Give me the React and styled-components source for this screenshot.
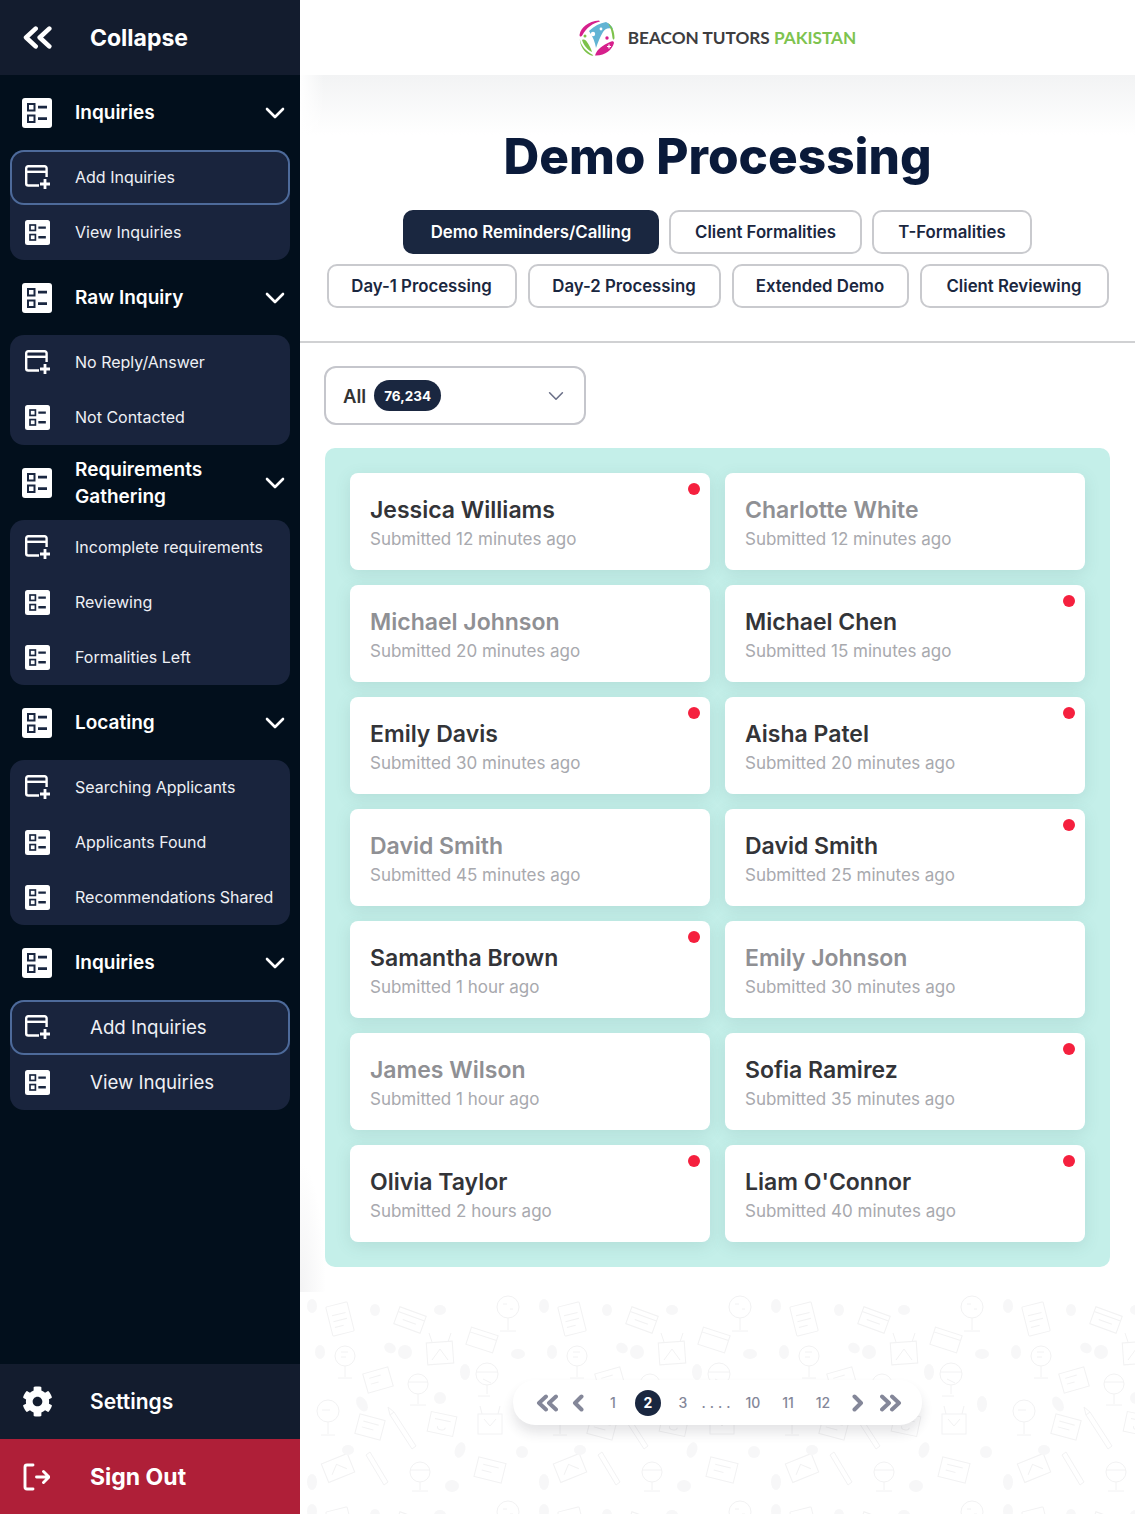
import React from 'react'
import styled, { createGlobalStyle } from 'styled-components'
import { FaCog } from 'react-icons/fa'

const font = 'Inter, "Open Sans", sans-serif'

const nav = [
  { title: 'Inquiries', items: [{ label: 'Add Inquiries', plus: true, active: true }, { label: 'View Inquiries' }] },
  { title: 'Raw Inquiry', items: [{ label: 'No Reply/Answer', plus: true }, { label: 'Not Contacted' }] },
  { title: 'Requirements Gathering', items: [{ label: 'Incomplete requirements', plus: true }, { label: 'Reviewing' }, { label: 'Formalities Left' }] },
  { title: 'Locating', items: [{ label: 'Searching Applicants', plus: true }, { label: 'Applicants Found' }, { label: 'Recommendations Shared' }] },
  { title: 'Inquiries', large: true, items: [{ label: 'Add Inquiries', plus: true, active: true }, { label: 'View Inquiries' }] },
]

const tabRows = [
  { gap: 10, tabs: [['Demo Reminders/Calling', 256, true], ['Client Formalities', 193], ['T-Formalities', 160]] },
  { gap: 11, tabs: [['Day-1 Processing', 190], ['Day-2 Processing', 193], ['Extended Demo', 177], ['Client Reviewing', 189]] },
]

const cards = [
  ['Jessica Williams', 'Submitted 12 minutes ago', true],
  ['Charlotte White', 'Submitted 12 minutes ago', false],
  ['Michael Johnson', 'Submitted 20 minutes ago', false],
  ['Michael Chen', 'Submitted 15 minutes ago', true],
  ['Emily Davis', 'Submitted 30 minutes ago', true],
  ['Aisha Patel', 'Submitted 20 minutes ago', true],
  ['David Smith', 'Submitted 45 minutes ago', false],
  ['David Smith', 'Submitted 25 minutes ago', true],
  ['Samantha Brown', 'Submitted 1 hour ago', true],
  ['Emily Johnson', 'Submitted 30 minutes ago', false],
  ['James Wilson', 'Submitted 1 hour ago', false],
  ['Sofia Ramirez', 'Submitted 35 minutes ago', true],
  ['Olivia Taylor', 'Submitted 2 hours ago', true],
  ["Liam O'Connor", 'Submitted 40 minutes ago', true],
]

const ListIcon = ({ size = 30 }) => (
  <svg width={size} height={size} viewBox="0 0 30 30">
    <rect width="30" height="30" rx="3" fill="#fff" />
    <rect x="6" y="6" width="6.500" height="6.500" fill="none" stroke="#1a2740" strokeWidth="2" />
    <rect x="6" y="17.500" width="6.500" height="6.500" fill="none" stroke="#1a2740" strokeWidth="2" />
    <path d="M16 9.200h9M16 20.700h9" stroke="#1a2740" strokeWidth="2.800" />
  </svg>
)

const CardPlusIcon = () => (
  <svg width="26" height="26" viewBox="0 0 26 26" fill="none" stroke="#fff">
    <path d="M21.600 12V3.200a2 2 0 0 0-2-2H3.200a2 2 0 0 0-2 2v15.300a2 2 0 0 0 2 2H14" strokeWidth="2.400" />
    <path d="M1.200 6.800h20.400" strokeWidth="2.400" />
    <path d="M20 14v10M15 19h10" strokeWidth="2.800" />
  </svg>
)

const Chevron = ({ color = '#fff', size = 20, width = 2.6 }) => (
  <svg width={size} height={size} viewBox="0 0 20 20" fill="none" stroke={color} strokeWidth={width} strokeLinecap="round" strokeLinejoin="round">
    <path d="M2 6l8 8 8-8" />
  </svg>
)

const Arrow = ({ double, flip, color = '#848799', width = 22, height = 18, stroke = 4 }) => (
  <svg width={width} height={height} viewBox={double ? '0 0 22 18' : '0 0 12 18'} fill="none" stroke={color} strokeWidth={stroke} strokeLinecap="round" strokeLinejoin="round" style={flip ? { transform: 'scaleX(-1)' } : undefined}>
    {double ? <path d="M10 2.500L3 9l7 6.500M20 2.500L13 9l7 6.500" /> : <path d="M9.500 2.500L3 9l6.500 6.500" />}
  </svg>
)

const SignOutIcon = () => (
  <svg width="28" height="28" viewBox="0 0 28 28" fill="none" stroke="#fff" strokeWidth="2.900" strokeLinecap="round" strokeLinejoin="round">
    <path d="M11 2H5a2 2 0 0 0-2 2v20a2 2 0 0 0 2 2h6" />
    <path d="M14.500 14H27M21.500 8.500L27 14l-5.500 5.500" />
  </svg>
)

const Logo = () => (
  <svg width="36" height="36" viewBox="0 0 36 36">
    <path d="M.5 15C2 7 9 1.500 20 .5l1 1C14 3 7 8 3.500 15 2 17 .8 17 .5 15z" fill="#d6208c" />
    <path d="M10 11c5-5 11-8 17-9 3 1.500 6 4 7 7-5-2-8 0-10 3-3 5-5 10-7 16-1-6-3-11-7-17z" fill="#62b4d4" />
    <path d="M29 3c4 3 6.500 8 6.500 15-.5 2-1.500 2-2 0-.5-5-1.500-10-4.500-15z" fill="#7cc24a" />
    <path d="M.8 19c1.200 7 6.200 12 13.200 16 1 .7-1 1-3 0C5 32 1 26 .8 19z" fill="#7cc24a" />
    <path d="M3 20c2-1 4 0 5 2 2 3 4 6 5 10-4-2-8-6-10-12z" fill="#7cc24a" />
    <path d="M16 35.500c2-6.500 8-10.500 15-13.500 2-1 4-1 4 1-2 7-9 13-19 12.500z" fill="#d6208c" />
    <circle cx="14" cy="14" r="2.200" fill="#fff" />
    <circle cx="22" cy="9" r="1.400" fill="#fff" />
    <circle cx="6" cy="16" r="1.500" fill="#7cc24a" />
    <path d="M28 26.500h4M30 24.500v4" stroke="#fff" strokeWidth="1.200" />
    <circle cx="28" cy="18" r="1.700" fill="#d6208c" />
  </svg>
)

const Doodles = () => (
  <PatternSvg aria-hidden="true">
    <defs>
      <pattern id="doodle" width="232" height="205" patternUnits="userSpaceOnUse">
        <g fill="none" stroke="#eeeeef" strokeWidth="1">
          <g transform="rotate(-14 40 27)">
            <rect x="29" y="12" width="22" height="30" rx="1" />
            <path d="M33 22h14M33 28h14M33 34h9" />
          </g>
          <g transform="rotate(20 110 28)">
            <rect x="96" y="19" width="28" height="18" />
            <path d="M96 24h28M103 30h14" />
          </g>
          <circle cx="208" cy="15" r="11" />
          <path d="M208 26v12M200 39h16M203 12h4M210 17h3" />
          <g transform="rotate(18 182 48)">
            <rect x="168" y="39" width="28" height="18" />
            <path d="M168 44h28" />
          </g>
          <rect x="127" y="50" width="26" height="22" transform="rotate(-4 140 61)" />
          <path d="M132 50l-3-9M148 50l3-9M132 68l8-11 8 11" />
          <circle cx="45" cy="64" r="10" />
          <path d="M45 74v11M38 86h14M41 60h7M41 65h5" />
          <g transform="rotate(-16 78 88)">
            <rect x="65" y="78" width="26" height="20" />
            <path d="M70 84h12M70 90h8" />
          </g>
          <circle cx="118" cy="92" r="10" />
          <path d="M108 90h20M118 102v10M110 113h16" />
          <circle cx="187" cy="82" r="11" />
          <path d="M176 80h22M187 93v9M178 104h12M183 87l8 4" />
          <circle cx="28" cy="119" r="11" />
          <path d="M28 130v12M21 143h14M22 118h8" />
          <g transform="rotate(15 70 135)">
            <rect x="57" y="125" width="26" height="20" />
            <path d="M62 131h16M62 137h12" />
          </g>
          <path d="M94 120l22 34-4 3-22-34zM90 123l-2-8 6 5" />
          <g transform="rotate(12 142 132)">
            <rect x="129" y="122" width="26" height="20" />
            <path d="M134 128h16M138 135a4 3 0 1 0 8 0" />
          </g>
          <rect x="178" y="122" width="24" height="20" />
          <path d="M182 122l-2-8M198 122l2-8M184 127l6 7 6-7" />
          <g transform="rotate(-22 38 176)">
            <rect x="24" y="166" width="28" height="20" />
            <path d="M30 180l8-8 8 8" />
          </g>
          <path d="M70 160l18 30-4 3-18-30z" />
          <circle cx="120" cy="180" r="10" />
          <path d="M110 178h20M120 190v8M112 199h16" />
          <g transform="rotate(14 190 178)">
            <rect x="176" y="168" width="28" height="20" />
            <path d="M182 174h16M182 180h10" />
          </g>
        </g>
        <g fill="#f5f5f6">
          <ellipse cx="12" cy="14" rx="5" ry="7" />
          <ellipse cx="75" cy="18" rx="5" ry="6" />
          <ellipse cx="140" cy="18" rx="6" ry="5" />
          <ellipse cx="20" cy="60" rx="5" ry="7" />
          <ellipse cx="90" cy="56" rx="6" ry="5" transform="rotate(30 90 56)" />
          <ellipse cx="105" cy="60" rx="7" ry="7" />
          <ellipse cx="165" cy="80" rx="5" ry="8" />
          <ellipse cx="218" cy="62" rx="7" ry="5" />
          <ellipse cx="62" cy="112" rx="5" ry="8" transform="rotate(-30 62 112)" />
          <ellipse cx="140" cy="106" rx="6" ry="6" />
          <ellipse cx="218" cy="112" rx="5" ry="8" />
          <ellipse cx="48" cy="158" rx="6" ry="5" />
          <ellipse cx="160" cy="158" rx="5" ry="8" transform="rotate(20 160 158)" />
          <ellipse cx="222" cy="160" rx="6" ry="6" />
          <ellipse cx="12" cy="190" rx="5" ry="8" />
          <ellipse cx="152" cy="194" rx="7" ry="6" />
        </g>
      </pattern>
    </defs>
    <rect width="100%" height="100%" fill="url(#doodle)" />
  </PatternSvg>
)

export default function App() {
  return (
    <Page>
      <GlobalStyle />
      <Sidebar>
        <CollapseBar>
          <IconSlot><Arrow double color="#fff" width={30} height={25} stroke={3.4} /></IconSlot>
          Collapse
        </CollapseBar>
        {nav.map((section, i) => (
          <div key={i}>
            <SectionHead>
              <ListIcon />
              <SectionTitle>{section.title}</SectionTitle>
              <Chevron />
            </SectionHead>
            <Group>
              {section.items.map((item) => (
                <GroupItem key={item.label} $active={item.active} $large={section.large}>
                  <ItemIcon>{item.plus ? <CardPlusIcon /> : <ListIcon size={25} />}</ItemIcon>
                  <ItemLabel>{item.label}</ItemLabel>
                </GroupItem>
              ))}
            </Group>
          </div>
        ))}
        <BottomBar $first>
          <IconSlot><FaCog size={31} color="#fff" /></IconSlot>
          Settings
        </BottomBar>
        <BottomBar $danger>
          <IconSlot><SignOutIcon /></IconSlot>
          Sign Out
        </BottomBar>
      </Sidebar>

      <Main>
        <TopBar>
          <Logo />
          <Brand>BEACON TUTORS <BrandGreen>PAKISTAN</BrandGreen></Brand>
        </TopBar>
        <Content>
          <Title>Demo Processing</Title>
          <Tabs>
            {tabRows.map((row, i) => (
              <TabRow key={i} $gap={row.gap}>
                {row.tabs.map(([label, w, active]) => (
                  <Tab key={label} $w={w} $active={active}>{label}</Tab>
                ))}
              </TabRow>
            ))}
          </Tabs>
          <Divider />
          <SelectBox>
            <SelectLabel>All</SelectLabel>
            <CountPill>76,234</CountPill>
            <SelectChevron><Chevron color="#6b7088" size={16} width={2} /></SelectChevron>
          </SelectBox>
          <Panel>
            {cards.map(([name, sub, unread], i) => (
              <Card key={i}>
                <CardName $unread={unread}>{name}</CardName>
                <CardSub>{sub}</CardSub>
                {unread && <Dot />}
              </Card>
            ))}
          </Panel>
        </Content>
        <Footer>
          <Doodles />
          <Pagination>
            <ArrowCell $w={37}><Arrow double /></ArrowCell>
            <ArrowCell $w={30} $pad={6}><Arrow width={12} /></ArrowCell>
            <PageCell>1</PageCell>
            <PageCell><PageCircle>2</PageCircle></PageCell>
            <PageCell>3</PageCell>
            <PageCell $dots>....</PageCell>
            <PageCell>10</PageCell>
            <PageCell>11</PageCell>
            <PageCell>12</PageCell>
            <ArrowCell $w={35}><Arrow width={12} flip /></ArrowCell>
            <ArrowCell $w={30}><Arrow double flip /></ArrowCell>
          </Pagination>
        </Footer>
      </Main>
    </Page>
  )
}

const GlobalStyle = createGlobalStyle`
  html, body { margin: 0; padding: 0; background: #fff; }
  * { box-sizing: border-box; }
  body { font-family: ${font}; }
`

const Page = styled.div`
  display: flex;
  width: 1135px;
  height: 1514px;
  overflow: hidden;
`

const Sidebar = styled.aside`
  width: 300px;
  flex: none;
  display: flex;
  flex-direction: column;
  background: #020f1c;
`

const IconSlot = styled.span`
  width: 90px;
  padding-left: 22px;
  flex: none;
  display: flex;
  align-items: center;
`

const CollapseBar = styled.div`
  height: 75px;
  display: flex;
  align-items: center;
  background: #131c2e;
  color: #fff;
  font-size: 23px;
  font-weight: 700;
`

const SectionHead = styled.div`
  height: 75px;
  display: flex;
  align-items: center;
  padding: 0 15px 0 22px;
  color: #fff;
`

const SectionTitle = styled.div`
  flex: 1;
  margin-left: 23px;
  margin-right: auto;
  max-width: 165px;
  font-size: 19px;
  line-height: 27px;
  font-weight: 600;
`

const Group = styled.div`
  margin: 0 10px;
  border-radius: 14px;
  background: #19243d;
`

const ItemIcon = styled.span`
  width: 26px;
  flex: none;
  display: flex;
  align-items: center;
`

const ItemLabel = styled.span`
  margin-bottom: 1px;
`

const GroupItem = styled.div`
  height: 55px;
  display: flex;
  align-items: center;
  gap: ${(p) => (p.$large ? '39px' : '24px')};
  padding-left: 15px;
  border-radius: 14px;
  color: #eef0f5;
  font-size: ${(p) => (p.$large ? '18.700px' : '16px')};
  font-weight: 400;
  box-shadow: ${(p) => (p.$active ? 'inset 0 0 0 2px #4d6a9a' : 'none')};
`

const BottomBar = styled.div`
  height: 75px;
  display: flex;
  align-items: center;
  margin-top: ${(p) => (p.$first ? 'auto' : '0')};
  background: ${(p) => (p.$danger ? '#af1f38' : '#131c2e')};
  color: #fff;
  font-size: ${(p) => (p.$danger ? '23px' : '21px')};
  font-weight: ${(p) => (p.$danger ? 700 : 600)};
`

const Main = styled.main`
  flex: 1;
  min-width: 0;
  display: flex;
  flex-direction: column;
  background: #fff;
`

const TopBar = styled.header`
  height: 75px;
  flex: none;
  display: flex;
  align-items: center;
  justify-content: center;
  gap: 13px;
  background: #fff;
`

const Brand = styled.div`
  font-family: Lato, sans-serif;
  font-size: 17.200px;
  font-weight: 700;
  color: #3d3d3f;
  white-space: pre;
`

const BrandGreen = styled.span`
  color: #7ec34f;
`

const Content = styled.section`
  height: 1217px;
  flex: none;
  padding-top: 50px;
  background:
    linear-gradient(90deg, #fff, rgba(255, 255, 255, 0) 24px) 0 0 / 100% 60px no-repeat,
    radial-gradient(26px 130px at 0 100%, #f3f3f4, rgba(255, 255, 255, 0)),
    linear-gradient(#f2f3f4, #fff 60px);
`

const Title = styled.h1`
  margin: 0;
  height: 60px;
  padding-top: 1px;
  line-height: 60px;
  text-align: center;
  font-size: 49.500px;
  font-weight: 800;
  color: #0a1a3a;
`

const Tabs = styled.div`
  margin-top: 25px;
  display: flex;
  flex-direction: column;
  gap: 10px;
`

const TabRow = styled.div`
  display: flex;
  justify-content: center;
  gap: ${(p) => p.$gap}px;
`

const Tab = styled.div`
  width: ${(p) => p.$w}px;
  height: 44px;
  display: flex;
  align-items: center;
  justify-content: center;
  border-radius: 10px;
  border: 2px solid ${(p) => (p.$active ? '#1a2740' : '#c9cace')};
  background: ${(p) => (p.$active ? '#1a2740' : '#fff')};
  color: ${(p) => (p.$active ? '#fff' : '#1a2740')};
  font-size: 16.800px;
  font-weight: 600;
`

const Divider = styled.div`
  height: 2px;
  margin-top: 33px;
  background: #d0d1d3;
`

const SelectBox = styled.div`
  width: 262px;
  height: 59px;
  margin: 23px 0 0 24px;
  padding: 0 20px 0 17px;
  display: flex;
  align-items: center;
  gap: 8px;
  border: 2px solid #c5c6cc;
  border-radius: 12px;
  background: #fff;
`

const SelectLabel = styled.span`
  font-size: 18.500px;
  font-weight: 600;
  color: #333;
`

const CountPill = styled.span`
  width: 67px;
  height: 31px;
  display: flex;
  align-items: center;
  justify-content: center;
  border-radius: 16px;
  background: #1a2740;
  color: #fff;
  font-size: 13.500px;
  font-weight: 700;
`

const SelectChevron = styled.span`
  margin-left: auto;
  display: flex;
`

const Panel = styled.div`
  width: 785px;
  margin: 23px 0 0 25px;
  padding: 25px;
  display: grid;
  grid-template-columns: 360px 360px;
  grid-auto-rows: 97px;
  gap: 15px;
  border-radius: 10px;
  background: #c4efe9;
`

const Card = styled.div`
  position: relative;
  padding: 22px 20px 0;
  border-radius: 8px;
  background: #fff;
  box-shadow: 0 4px 16px rgba(60, 110, 105, 0.13);
`

const CardName = styled.div`
  font-size: 23px;
  line-height: 30px;
  font-weight: 600;
  color: ${(p) => (p.$unread ? '#333438' : '#8f9094')};
`

const CardSub = styled.div`
  margin-top: 2px;
  font-size: 17px;
  line-height: 24px;
  font-weight: 400;
  color: #a8a9ae;
`

const Dot = styled.span`
  position: absolute;
  top: 10px;
  right: 10px;
  width: 12px;
  height: 12px;
  border-radius: 50%;
  background: #f5203e;
`

const Footer = styled.footer`
  position: relative;
  flex: 1;
  padding-top: 88px;
  display: flex;
  justify-content: center;
  align-items: flex-start;
`

const PatternSvg = styled.svg`
  position: absolute;
  inset: 0;
  width: 100%;
  height: 100%;
  opacity: 0.75;
`

const Pagination = styled.nav`
  position: relative;
  width: 409px;
  height: 45px;
  margin-left: -1px;
  padding-left: 16px;
  display: flex;
  align-items: center;
  border-radius: 22px;
  background: #fff;
  box-shadow: 0 8px 12px rgba(40, 40, 60, 0.12);
`

const ArrowCell = styled.span`
  width: ${(p) => p.$w}px;
  flex: none;
  display: flex;
  align-items: center;
  justify-content: ${(p) => (p.$pad ? 'flex-start' : 'center')};
  padding-left: ${(p) => p.$pad || 0}px;
`

const PageCell = styled.span`
  width: 35px;
  flex: none;
  display: flex;
  align-items: center;
  justify-content: center;
  font-size: 14px;
  font-weight: 500;
  color: #848799;
  letter-spacing: ${(p) => (p.$dots ? '4px' : '0')};
`

const PageCircle = styled.span`
  width: 26px;
  height: 26px;
  display: flex;
  align-items: center;
  justify-content: center;
  border-radius: 50%;
  background: #1a2740;
  color: #fff;
  font-weight: 700;
`
